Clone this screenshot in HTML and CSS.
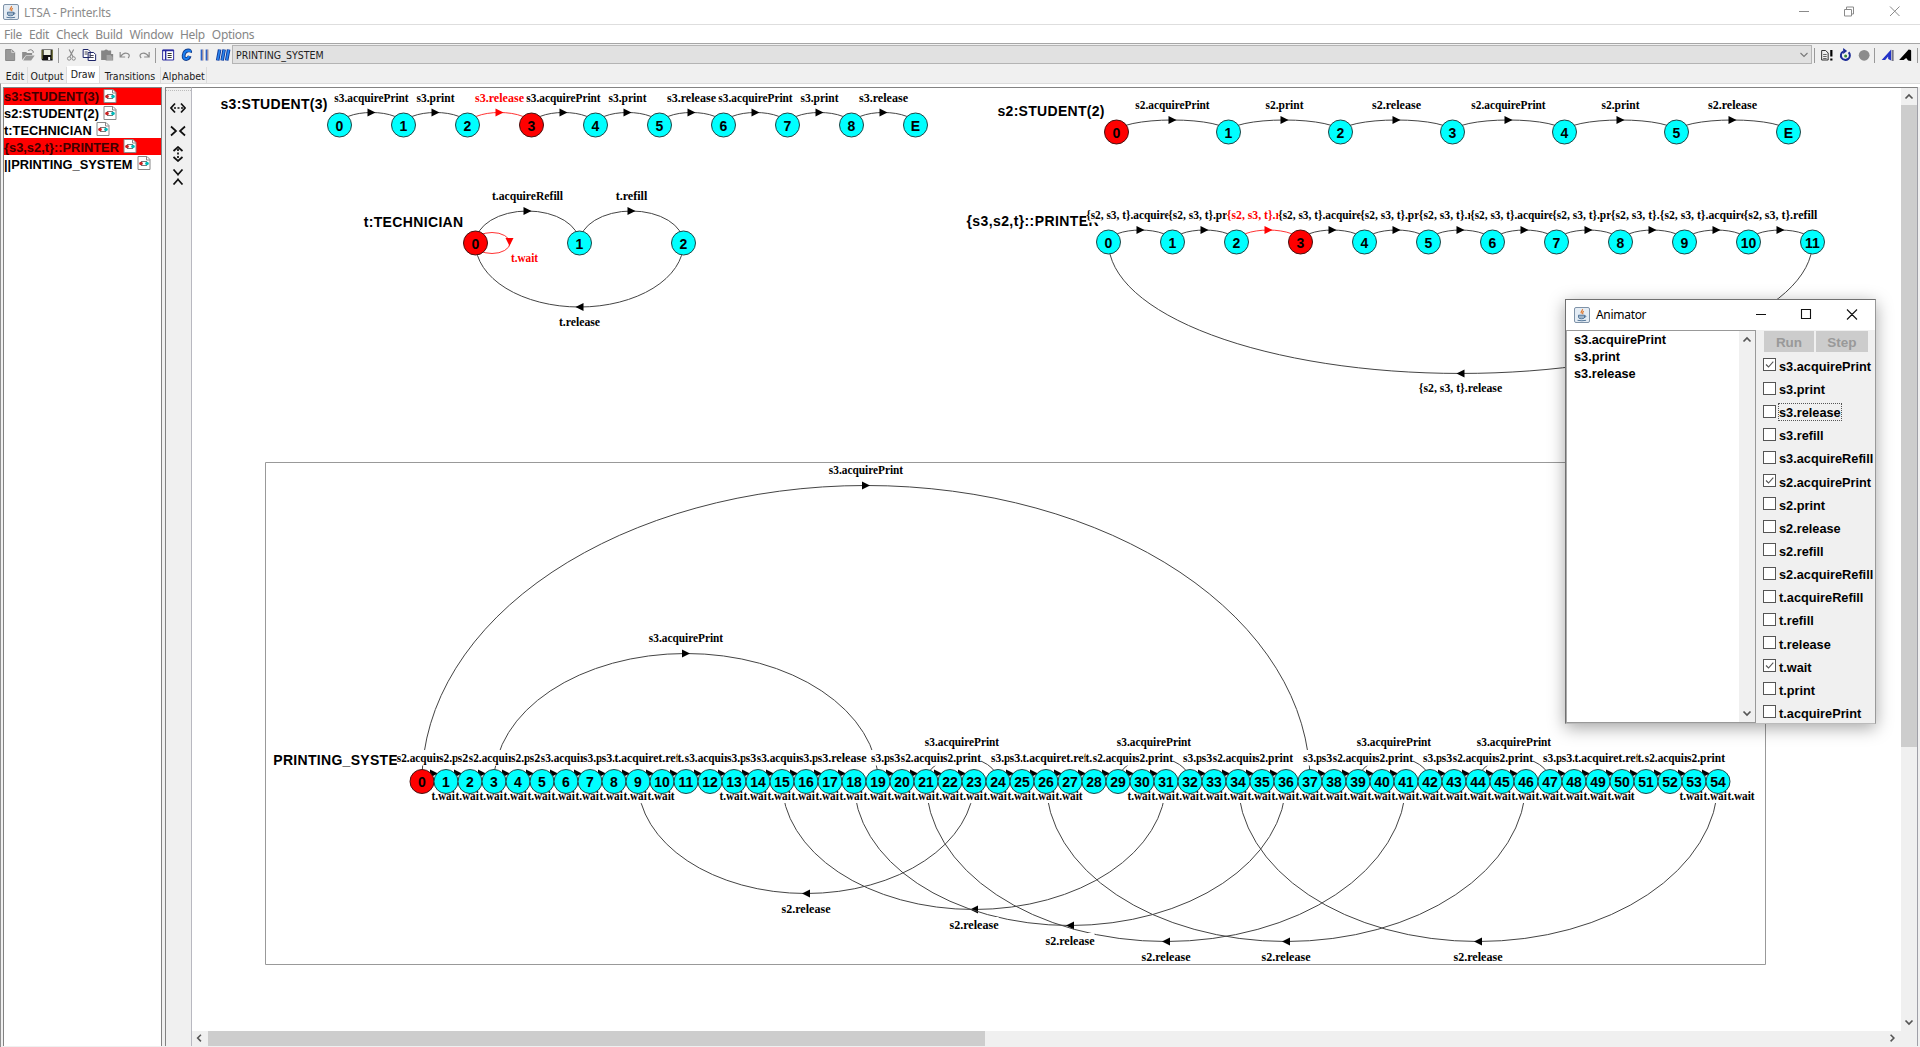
FILE: index.html
```html
<!DOCTYPE html>
<html lang="en">
<head>
<meta charset="utf-8">
<title>LTSA - Printer.lts</title>
<link rel="stylesheet" href="styles.css">
</head>
<body>
<svg class="defs" aria-hidden="true">
  <symbol id="java" viewBox="0 0 16 16">
    <rect x=".5" y=".5" width="15" height="15" rx="1.5" fill="#e4ecf4" stroke="#7f93a8"/>
    <path d="M8.4 2.2c1 1.3-2.6 2.3-1 4.3M9.8 4.2c-2 1-.6 1.8-1.2 3" fill="none" stroke="#e0762a" stroke-width="1.2"/>
    <path d="M4.5 8.2h6v2.2q0 1.4-3 1.4t-3-1.4zM10.5 8.8q1.7-.3 1.3.8t-1.8 1M3.5 13.3q4.3 1 8.6 0" fill="#9db3c9" stroke="#4b6f94" stroke-width=".9"/>
  </symbol>
  <symbol id="machine" viewBox="0 0 14 14">
    <path d="M1 .5h9l3 3v10H1z" fill="#fff" stroke="#888"/>
    <path d="M9.500 .5v3.500h3.500" fill="none" stroke="#888"/>
    <path d="M4 5.500h6M4 9.500h6" stroke="#555" stroke-width=".8" fill="none"/>
    <circle cx="4" cy="7.500" r="1.800" fill="#c22"/><circle cx="10" cy="7.500" r="1.800" fill="#0bb"/>
  </symbol>
</svg>

<header class="titlebar">
  <svg class="app-icon"><use href="#java"/></svg>
  <span class="title">LTSA - Printer.lts</span>
  <svg class="win-buttons" viewBox="0 0 110 24"><path d="M2 11.500h10M47.500 9.500h7v6.500h-7zM49.500 9.500v-2.500h7v7h-2M93 6.500l9.500 9.500M102.500 6.500L93 16" fill="none" stroke="#8a8a8a"/></svg>
</header>
<nav class="menubar">
  <span>File</span><span>Edit</span><span>Check</span><span>Build</span><span>Window</span><span>Help</span><span>Options</span>
</nav>
<div class="toolbar">
  <svg class="tool" viewBox="0 0 18 18"><path d="M4.500 3.500h6l3 3v8h-9z" fill="#999" stroke="#888"/><path d="M10.500 3.500v3h3" stroke="#ccc" fill="none"/></svg>
  <svg class="tool" viewBox="0 0 18 18"><path d="M3 14V6h4l1 1h5v2H7z" fill="#8d8d8d"/><path d="M4 14.500L7 9.500h8.500L12 14.500z" fill="#999"/><path d="M9 4.500q3-2 5 .5v2" fill="none" stroke="#888"/></svg>
  <svg class="tool" viewBox="0 0 18 18"><path d="M3.500 3.500h11v11h-10l-1-1z" fill="#111"/><path d="M5.500 4h7v5h-7z" fill="#ecefe0"/><path d="M4 4v9M14 4v9" stroke="#84843c"/><path d="M10 11h2v3h-2z" fill="#fff"/></svg>
  <i class="sep"></i>
  <svg class="tool" viewBox="0 0 18 18"><path d="M7 3.500l4 7.500M11.500 3.500l-4 7.500" stroke="#8a8a8a" stroke-width="1.200" fill="none"/><circle cx="7" cy="12.500" r="1.700" stroke="#8a8a8a" fill="none"/><circle cx="11.500" cy="12.500" r="1.700" stroke="#8a8a8a" fill="none"/></svg>
  <svg class="tool" viewBox="0 0 18 18"><path d="M3 3.500h5l2 2v6H3zM8 6.500h5.500l2 2v6H8z" fill="#fff" stroke="#1c2468"/><path d="M4.500 6h3M4.500 8h3M9.500 9.500h4M9.500 11.500h4" stroke="#445"/></svg>
  <svg class="tool" viewBox="0 0 18 18"><path d="M3 4.500h3q2-2 4 0h3V8h2v6.500H7.500V14H3z" fill="#858585"/><path d="M8.500 9h4l2 2v3h-6z" fill="#a5a5a5"/></svg>
  <svg class="tool" viewBox="0 0 18 18"><path d="M4 6v5h5M4.500 10.500q3-4.500 7-3 3 1.500.5 4.500" fill="none" stroke="#8a8a8a" stroke-width="1.200"/></svg>
  <svg class="tool" viewBox="0 0 18 18"><path d="M14 6v5H9M13.500 10.500q-3-4.500-7-3-3 1.500-.5 4.500" fill="none" stroke="#8a8a8a" stroke-width="1.200"/></svg>
  <i class="sep"></i>
  <svg class="tool" viewBox="0 0 18 18"><path d="M3.500 4h11v10h-11z" fill="#fff" stroke="#2a2aa0"/><path d="M3.500 4.500h11M6.500 4v10" stroke="#2a2aa0" stroke-width="1.400"/><path d="M8.500 7.500h4M8.500 9.500h4M8.500 11.500h4" stroke="#333"/></svg>
  <svg class="tool" viewBox="0 0 18 18"><path d="M13 6.500q.500-2-2-2-4 .3-4.500 5-.2 3.500 2.500 3.500 2.500 0 3.500-3" fill="none" stroke="#123c8c" stroke-width="3.800"/><path d="M13 6q.500-1.500-2-1.500-4 .3-4.500 5-.2 3.500 2.500 3.500 2 0 3-3" fill="none" stroke="#1a7ff0" stroke-width="2"/></svg>
  <svg class="tool" viewBox="0 0 18 18"><path d="M6.500 3.500v11M11.500 3.500v11" stroke="#2a5fc8" stroke-width="2"/><path d="M7.800 3.500v11M12.800 3.500v11" stroke="#a88" stroke-width="1"/></svg>
  <svg class="tool" viewBox="0 0 18 18"><path d="M5.500 3.500l-2 11M10 3.500l-2 11M14.500 3.500l-2 11" stroke="#123c9c" stroke-width="3.600"/><path d="M5.500 4l-2 10M10 4l-2 10M14.500 4l-2 10" stroke="#2a86f0" stroke-width="1.600"/></svg>
  <div class="combo"><span>PRINTING_SYSTEM</span><svg width="10" height="8" viewBox="0 0 10 8"><path d="M1.500 2l3.500 3.500L8.500 2" fill="none" stroke="#777" stroke-width="1.100"/></svg></div>
  <i class="sep"></i>
  <svg class="tool" viewBox="0 0 18 18"><path d="M4.500 4.500h4l2.500 2.500v7H4.500z" fill="#eee" stroke="#333"/><path d="M6 8.500h3.500M6 10.500h3.500M6 12.500h3.500" stroke="#666"/><path d="M14.200 4v6.500M14.200 12.500v2" stroke="#000" stroke-width="2.200"/></svg>
  <svg class="tool" viewBox="0 0 18 18"><path d="M8 5.500a4.500 4.500 0 1 0 5.500.8" fill="none" stroke="#1c2c96" stroke-width="2"/><path d="M8 2l4 3-4 3z" fill="#1c2c96"/><circle cx="10.500" cy="10" r="1.500" fill="#383"/></svg>
  <svg class="tool" viewBox="0 0 18 18"><circle cx="10" cy="9.300" r="5.400" fill="#8c8c8c"/></svg>
  <i class="sep"></i>
  <svg class="tool" viewBox="0 0 18 18"><path d="M3.500 14L13 3.500V14.500L10 13V10.500L7 14z" fill="#2434c8"/><path d="M14.500 4v11" stroke="#778" stroke-width="2"/></svg>
  <svg class="tool" viewBox="0 0 18 18"><path d="M3 14L12.500 3.500q3 0 2.500 2V15l-3-.500-2-2.500L7.500 14z" fill="#000"/></svg>
  <i class="sep"></i>
</div>
<div class="tabs">
  <span class="tab t-edit">Edit</span><span class="tab t-output">Output</span><span class="tab t-draw active">Draw</span><span class="tab t-trans">Transitions</span><span class="tab t-alpha">Alphabet</span>
</div>
<main class="pane">
  <ul class="machines">
    <li class="on">s3:STUDENT(3) <svg><use href="#machine"/></svg></li>
    <li>s2:STUDENT(2) <svg><use href="#machine"/></svg></li>
    <li>t:TECHNICIAN <svg><use href="#machine"/></svg></li>
    <li class="on">{s3,s2,t}::PRINTER <svg><use href="#machine"/></svg></li>
    <li>||PRINTING_SYSTEM <svg><use href="#machine"/></svg></li>
  </ul>
  <div class="strip">
    <svg viewBox="0 0 16 16"><path d="M5 3.500L1 8l4 4.500M11 3.500l4 4.500-4 4.500" /><path d="M4 8h9" stroke-dasharray="2 1.500"/></svg>
    <svg viewBox="0 0 16 16"><path d="M1 3.500l5 4.500L1 12.500M15 3.500L10 8l5 4.500M5 8h1.500M9.500 8h2"/></svg>
    <svg viewBox="0 0 16 16"><path d="M3.500 5L8 1l4.500 4M3.500 11L8 15l4.500-4"/><path d="M8 3v10" stroke-dasharray="2 1.500"/></svg>
    <svg viewBox="0 0 16 16"><path d="M3.500 .5L8 5.500L12.500 .5M3.500 15.500L8 10.500l4.500 5M8 5v1.500M8 9.500V11"/></svg>
  </div>
  <div class="view">
    <div class="canvas-row">
      <svg class="canvas" id="canvas" viewBox="192 88 1709 943"></svg>
      <div class="vbar">
        <svg viewBox="0 0 16 17"><path d="M4.500 10.500L8 7l3.500 3.500"/></svg>
        <div class="vthumb"></div>
        <svg class="end" viewBox="0 0 16 17"><path d="M4.500 6.500L8 10l3.500-3.500"/></svg>
      </div>
    </div>
    <div class="hbar">
      <svg viewBox="0 0 16 16"><path d="M9 4L5.500 7.500L9 11"/></svg>
      <div class="hthumb"></div>
      <svg class="end" viewBox="0 0 16 16"><path d="M6.500 4L10 7.500L6.500 11"/></svg>
    </div>
  </div>
</main>

<section class="animator">
  <header class="anim-title">
    <svg class="app-icon"><use href="#java"/></svg><span>Animator</span>
    <svg class="anim-buttons" viewBox="0 0 110 30"><path d="M1 14.500h10M46.500 9.500h9v9h-9zM92 9.500l10 10M102 9.500l-10 10" fill="none" stroke="#111" stroke-width="1.100"/></svg>
  </header>
  <div class="anim-body">
    <div class="trace">
      <div class="trace-list"><span>s3.acquirePrint</span><span>s3.print</span><span>s3.release</span></div>
      <div class="trace-bar">
        <svg viewBox="0 0 16 17"><path d="M4.500 10.500L8 7l3.500 3.500"/></svg>
        <svg class="end" viewBox="0 0 16 17"><path d="M4.500 6.500L8 10l3.500-3.500"/></svg>
      </div>
    </div>
    <div class="actions">
      <div class="run-step"><span class="run">Run</span><span class="step">Step</span></div>
      <div class="checks" id="checks"></div>
    </div>
  </div>
</section>
<script src="script.js"></script>
</body>
</html>
```
FILE: styles.css
```css
* { box-sizing: border-box; }
body {
  margin: 0; width: 1920px; height: 1047px; overflow: hidden;
  display: flex; flex-direction: column; background: #f0f0f0;
  font-family: "Noto Sans", sans-serif; font-size: 12px; color: #000;
}
svg { display: block; flex: none; }
.defs { position: absolute; width: 0; height: 0; }

.titlebar { height: 25px; display: flex; align-items: center; background: #fff; border-bottom: 1px solid #dedede; padding-left: 3px; color: #8c8c8c; }
.app-icon { width: 16px; height: 16px; }
.title { margin-left: 5px; font-size: 12px; letter-spacing: -.2px; flex: 1; }
.win-buttons { width: 110px; height: 24px; margin-right: 13px; }

.menubar { height: 19px; display: flex; align-items: center; gap: 7px; background: #fff; border-bottom: 1px solid #a6a6a6; padding-left: 4px; color: #868686; letter-spacing: -.33px; }

.toolbar { height: 22px; display: flex; align-items: center; padding-left: 1px; background: #f0f0f0; }
.tool { width: 18.300px; height: 18px; margin-top: -1px; }
.sep { flex: none; width: 5.700px; height: 15px; background: linear-gradient(#999, #999) center / 1px 100% no-repeat; }
.combo { flex: 1; height: 19px; margin-top: -1px; margin-right: -1px; display: flex; align-items: center; justify-content: space-between; border: 1px solid #b4b4b4; background: #e1e1e1; padding: 0 2px 0 3px; font-family: "DejaVu Sans Condensed", "DejaVu Sans", sans-serif; font-size: 10.500px; letter-spacing: .02px; color: #222; }

.tabs { height: 17px; display: flex; align-items: flex-end; padding-left: 3px; font-family: "DejaVu Sans Condensed", "DejaVu Sans", sans-serif; font-size: 10.500px; color: #1a1a1a; }
.tab { height: 16px; line-height: 18px; text-align: center; border-right: 1px solid #dcdcdc; white-space: nowrap; flex: none; }
.tab.active { background: #fff; height: 19px; line-height: 17px; margin-bottom: -2px; }
.t-edit { width: 25px; } .t-output { width: 39px; } .t-draw { width: 33px; } .t-trans { width: 61px; } .t-alpha { width: 46px; }

.pane { flex: 1; display: flex; min-height: 0; border-top: 1px solid #dcdcdc; padding: 3px 2px 1px 2px; background: linear-gradient(#fff, #fff) 0 0 / 100% 3px no-repeat, #f0f0f0; border-left: 1px solid #8f8f8f; }
.machines { list-style: none; margin: 0; padding: 0; width: 159px; background: #fff; border: 1px solid #828282; border-bottom: 0; font: bold 12.850px "Liberation Sans", Arial, sans-serif; }
.machines li { height: 16.800px; display: flex; align-items: center; gap: 4px; white-space: nowrap; padding-top: 1px; }
.machines li.on { background: #f00; color: #400000; }
.machines svg { width: 14px; height: 14px; margin-top: -2px; }
.strip { width: 27px; margin-left: 3px; border-left: 1px solid #828282; border-right: 1px solid #b8b8c0; border-top: 1px solid #828282; background: linear-gradient(90deg, #bbb 50%, transparent 50%) 0 2px / 2px 1px repeat-x; display: flex; flex-direction: column; align-items: center; padding: 12px 2px 0 0; gap: 7px; }
.strip svg { width: 16px; height: 16px; fill: none; stroke: #111; stroke-width: 1.700; }
.view { flex: 1; display: flex; flex-direction: column; border-top: 1px solid #828282; border-right: 1px solid #a0a0a8; }
.canvas-row { flex: 1; display: flex; background: #fff; min-height: 0; }
.canvas { flex: 1; height: 943px; }
.vbar { width: 16px; background: #f0f0f0; display: flex; flex-direction: column; }
.vbar svg, .trace-bar svg { width: 16px; height: 17px; }
.vbar svg, .hbar svg, .trace-bar svg { fill: none; stroke: #555; stroke-width: 1.700; }
.vthumb { height: 642px; background: #cdcdcd; }
.end { margin-top: auto; }
.hbar { height: 15px; background: #f0f0f0; display: flex; }
.hbar svg { width: 16px; height: 15px; }
.hthumb { width: 777px; background: #cdcdcd; }
.hbar .end { margin: 0 17px 0 auto; }

.edge { fill: none; stroke: #444; stroke-width: 1; }
.edge.live { stroke: #f33; }
.arrow { fill: #000; } .arrow.live { fill: #f00; }
.mask { fill: #fff; }
.lbl { font: bold 11.500px "Liberation Serif", "Times New Roman", serif; fill: #000; }
.lbl.live { fill: #f00; }
.name { font: bold 14px "Liberation Sans", Arial, sans-serif; }
.node { fill: #0ff; stroke: #244; stroke-width: 1; }
.node.live { fill: #f00; stroke: #411; }
.num { font: bold 14px "Liberation Sans", Arial, sans-serif; text-anchor: middle; }
.frame { fill: none; stroke: #999; }

.animator { position: absolute; left: 1565px; top: 299px; width: 311px; height: 425px; display: flex; flex-direction: column; background: #f0f0f0; border: 1px solid #707070; border-right-color: #999; border-bottom-color: #bbb; box-shadow: 0 4px 16px rgba(0,0,0,.35); font: bold 12.750px "Liberation Sans", Arial, sans-serif; }
.anim-title { height: 30px; display: flex; align-items: center; background: #fff; padding: 0 0 1px 8px; font: 12px "Noto Sans", sans-serif; }
.anim-title span { margin-left: 6px; flex: 1; letter-spacing: -.3px; }
.anim-buttons { width: 110px; height: 30px; margin-right: 10px; }
.anim-body { flex: 1; display: flex; min-height: 0; }
.trace { width: 190px; display: flex; background: #fff; border: 1px solid #999; border-left: 1px solid #aaa; }
.trace-list { flex: 1; display: flex; flex-direction: column; padding: 1px 0 0 7px; line-height: 16.800px; }
.trace-bar { width: 16px; background: #f0f0f0; display: flex; flex-direction: column; }
.actions { flex: 1; padding: 1px 0 0 7px; }
.run-step { display: flex; gap: 2px; height: 21px; margin-left: 1px; font-size: 13.500px; color: #999; text-align: center; line-height: 23px; }
.run-step span { background: #ccc; }
.run { width: 50px; } .step { width: 52px; }
.checks { display: flex; flex-direction: column; padding-top: 2.300px; }
.check { height: 23.150px; display: flex; align-items: center; gap: 3px; white-space: nowrap; }
.check svg { width: 13px; height: 13px; margin-top: -2px; }
.check span { line-height: 15px; padding-top: 1px; }
.check.focus span { outline: 1px dotted #555; }
```
FILE: script.js
```js
const W = {
  acquirePrint: 62.3, print: 26, release: 37, acquireRefill: 67, refill: 27.5, wait: 23
};
const PRE = { s2: 12, s3: 12, t: 4.2, '{s2, s3, t}': 46.3 };
const r1 = n => Math.round(n * 100) / 100;

function textWidth(label) {
  const i = label.lastIndexOf('.');
  return PRE[label.slice(0, i)] + W[label.slice(i + 1)];
}

// Labels carry an opaque background, so a later label covers the tail of the one before it.
function labelAt(label, cx, base, live) {
  const w = textWidth(label), x = r1(cx - w / 2);
  return `<rect class="mask" x="${x}" y="${r1(base - 12)}" width="${r1(w)}" height="15.500"/>` +
    `<text class="lbl${live ? ' live' : ''}" x="${x}" y="${base}" textLength="${r1(w)}" lengthAdjust="spacingAndGlyphs">${label}</text>`;
}

function machine(m) {
  const X = i => m.x + i * m.step;
  let arcs = '', labels = '', nodes = '';
  for (const [a, b, label, live] of m.edges) {
    const rx = Math.abs(b - a) * m.step / 2, ry = Math.abs(b - a) * m.rise;
    const mid = (X(a) + X(b)) / 2, up = b > a, ay = m.y + (up ? -ry : ry);
    const cls = live ? ' live' : '', d = up ? 4 : -4;
    arcs += `<path class="edge${cls}" d="M${X(a)} ${m.y}A${rx} ${ry} 0 0 1 ${X(b)} ${m.y}"/>` +
      `<path class="arrow${cls}" d="M${mid - d} ${ay - 4}L${mid + d} ${ay}L${mid - d} ${ay + 4}z"/>`;
    labels += labelAt(label, mid, Math.round(ay + (up ? m.above || -11 : 19)), live);
  }
  arcs += m.extra || '';
  for (const i of m.waits || []) labels += labelAt('t.wait', X(i) + 23, m.y + 18, false);
  for (let i = 0; i < m.count; i++) {
    const cls = i === m.current ? ' live' : '';
    const n = m.error && i === m.count - 1 ? 'E' : i;
    nodes += `<circle class="node${cls}" cx="${X(i)}" cy="${m.y}" r="12"/><text class="num" x="${X(i)}" y="${m.y + 5.5}">${n}</text>`;
  }
  const [name, nx, ny, nw] = m.name;
  return arcs + `<text class="name" x="${nx}" y="${ny}" textLength="${nw}">${name}</text>` + labels + (m.over || '') + nodes;
}

const chain = (from, list) => list.map((l, i) => [from + i, from + i + 1, l]);
const cycle = p => [p + '.acquirePrint', p + '.print', p + '.release'];
const refill = ['t.acquireRefill', 't.refill', 't.release'];
const range = (a, b) => Array.from({ length: b - a + 1 }, (_, i) => a + i);

const student3 = chain(0, [...cycle('s3'), ...cycle('s3'), ...cycle('s3')]);
student3[2].push(true);
const all = '{s2, s3, t}';
const printer = chain(0, [...cycle(all), ...cycle(all), ...cycle(all), all + '.acquireRefill', all + '.refill']);
printer[2].push(true);

const system = [
  ...chain(0, [...cycle('s2'), ...cycle('s2'), ...cycle('s3'), ...refill, ...cycle('s3'), ...cycle('s3')]),
  ...chain(19, ['s3.print', 's3.release', 's2.acquirePrint', 's2.print']),
  ...chain(24, ['s3.print', 's3.release', ...refill, 's2.acquirePrint', 's2.print']),
  ...chain(32, ['s3.print', 's3.release', 's2.acquirePrint', 's2.print']),
  ...chain(37, ['s3.print', 's3.release', 's2.acquirePrint', 's2.print']),
  ...chain(42, ['s3.print', 's3.release', 's2.acquirePrint', 's2.print']),
  ...chain(47, ['s3.print', 's3.release', ...refill, 's2.acquirePrint', 's2.print']),
  ...[[0, 37], [3, 19], [21, 24], [29, 32], [39, 42], [44, 47]].map(e => [...e, 's3.acquirePrint']),
  ...[[23, 9], [31, 15], [36, 18], [41, 21], [46, 26], [54, 34]].map(e => [...e, 's2.release'])
];

const canvas = document.getElementById('canvas');
canvas.innerHTML =
  machine({ x: 339.5, y: 125, step: 64, rise: 12.5, count: 10, current: 3, error: true, edges: student3, name: ['s3:STUDENT(3)', 220.5, 108.5, 107] }) +
  machine({ x: 1116.5, y: 132, step: 112, rise: 12, count: 7, current: 0, error: true, edges: chain(0, [...cycle('s2'), ...cycle('s2')]), name: ['s2:STUDENT(2)', 997.5, 115.7, 107] }) +
  machine({
    x: 475.5, y: 243, step: 104, rise: 32, count: 3, current: 0,
    edges: [[0, 1, 't.acquireRefill'], [1, 2, 't.refill'], [2, 0, 't.release']],
    extra: '<ellipse class="edge live" cx="492" cy="243" rx="18" ry="10.5"/><path class="arrow live" d="M505.500 238h8l-4 8z"/>',
    over: labelAt('t.wait', 524.5, 261.5, true),
    name: ['t:TECHNICIAN', 363.7, 226.5, 99.5]
  }) +
  machine({ x: 1108.5, y: 242, step: 64, rise: 11.95, count: 12, current: 3, edges: [...printer, [11, 0, all + '.release']], name: ['{s3,s2,t}::PRINTER', 966.5, 225.5, 132] }) +
  machine({ x: 422, y: 781.5, step: 24, rise: 8, above: -11.6, count: 55, current: 0, edges: system, waits: [...range(0, 9), ...range(12, 26), ...range(29, 49), 52, 53, 54], name: ['PRINTING_SYSTE', 273.3, 765.3, 124.5] }) +
  '<path class="frame" d="M265.5 462.5H1765.5V964.5H265.5z"/>';

// Drop the letters of a label that lie wholly under the next label on the same line.
const labels = [...canvas.querySelectorAll('.lbl')];
const edits = [];
labels.forEach((el, i) => {
  const next = labels[i + 1];
  if (!next || next.getAttribute('y') !== el.getAttribute('y')) return;
  const x = +el.getAttribute('x'), limit = +next.getAttribute('x');
  const text = el.textContent;
  if (limit <= x || limit >= x + +el.getAttribute('textLength')) return;
  let n = text.length;
  while (n > 1 && el.getStartPositionOfChar(n - 1).x > limit - 1.6) n--;
  if (n < text.length) edits.push([el, text.slice(0, n), el.getEndPositionOfChar(n - 1).x - x]);
});
for (const [el, text, width] of edits) {
  el.textContent = text;
  el.setAttribute('textLength', r1(width));
}

const enabled = ['s3.acquirePrint', 's2.acquirePrint', 't.wait'];
const actions = ['s3.acquirePrint', 's3.print', 's3.release', 's3.refill', 's3.acquireRefill',
  's2.acquirePrint', 's2.print', 's2.release', 's2.refill', 's2.acquireRefill',
  't.acquireRefill', 't.refill', 't.release', 't.wait', 't.print', 't.acquirePrint'];
document.getElementById('checks').innerHTML = actions.map(a =>
  `<label class="check${a === 's3.release' ? ' focus' : ''}"><svg viewBox="0 0 13 13"><rect x=".5" y=".5" width="12" height="12" fill="#fff" stroke="#555"/>` +
  (enabled.includes(a) ? '<path d="M3 6.500l2.500 2.500L10.300 3.700" fill="none" stroke="#555" stroke-width="1.100"/>' : '') +
  `</svg><span>${a}</span></label>`).join('');
```
